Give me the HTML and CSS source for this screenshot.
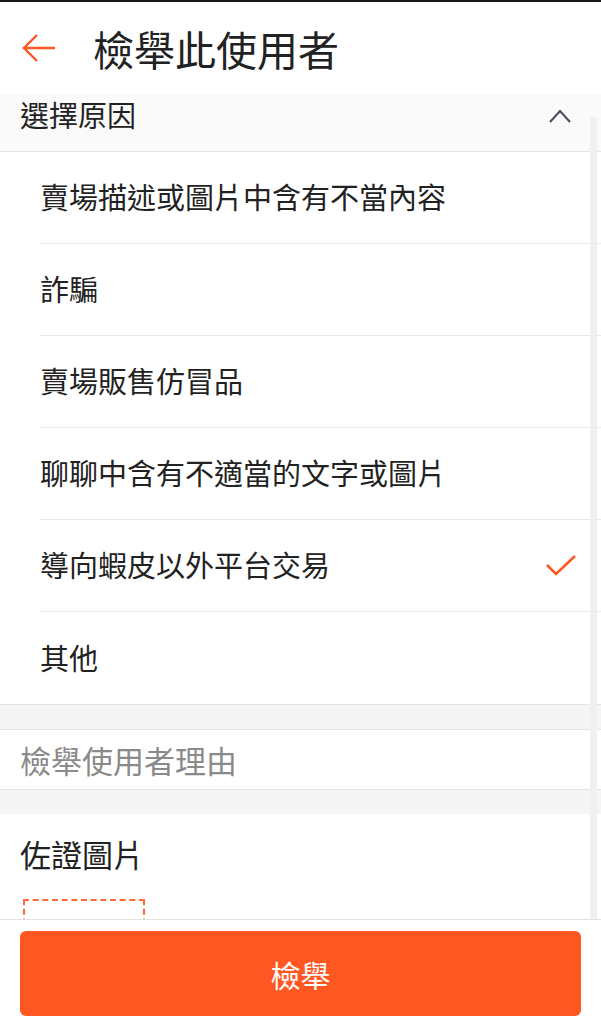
FILE: index.html
```html
<!DOCTYPE html>
<html lang="zh-Hant">
<head>
    <meta charset="UTF-8">
    <meta name="viewport" content="width=device-width, initial-scale=1.0">
    <title>檢舉此使用者</title>
    <link rel="stylesheet" href="styles.css">
</head>
<body>
    <div class="page">
        <div class="topbar">
            <svg class="back" width="34" height="30" viewBox="0 0 34 30">
                <path d="M33 15H3M15 2L2 15l13 13" fill="none" stroke="#ff5722" stroke-width="2.4"/>
            </svg>
            <div class="title">檢舉此使用者</div>
        </div>
        <div class="content">
            <div class="section-head">
                <span>選擇原因</span>
                <svg width="22" height="14" viewBox="0 0 22 14">
                    <path d="M1 13L11 2l10 11" fill="none" stroke="#4a4a5e" stroke-width="2"/>
                </svg>
            </div>
            <div class="options">
                <div class="option"><span>賣場描述或圖片中含有不當內容</span></div>
                <div class="option"><span>詐騙</span></div>
                <div class="option"><span>賣場販售仿冒品</span></div>
                <div class="option"><span>聊聊中含有不適當的文字或圖片</span></div>
                <div class="option selected">
                    <span>導向蝦皮以外平台交易</span>
                    <svg width="32" height="24" viewBox="0 0 32 24">
                        <path d="M2 11l9 9L30 2" fill="none" stroke="#ff5722" stroke-width="2.6"/>
                    </svg>
                </div>
                <div class="option"><span>其他</span></div>
            </div>
            <div class="gap"></div>
            <div class="reason">檢舉使用者理由</div>
            <div class="gap"></div>
            <div class="evidence">
                <div class="evidence-title">佐證圖片</div>
                <div class="upload"></div>
            </div>
            <div class="scroll-thumb"></div>
        </div>
        <div class="footer">
            <button class="submit">檢舉</button>
        </div>
    </div>
</body>
</html>
```

FILE: styles.css
```css
body {
    margin: 0;
    font-family: "Noto Sans CJK TC", "Noto Sans", sans-serif;
    background: #fff;
    color: #222;
}
.page {
    width: 601px;
    height: 1024px;
    display: flex;
    flex-direction: column;
    overflow: hidden;
}
.topbar {
    height: 93px;
    border-top: 2px solid #1a1a1a;
    display: flex;
    align-items: center;
    background: #fff;
}
.back {
    margin-left: 22px;
    margin-top: -2px;
}
.title {
    margin-left: 37px;
    font-size: 41px;
    line-height: 1;
    color: #222;
}
.content {
    flex: 1;
    min-height: 0;
    position: relative;
    background: #f5f5f5;
}
.section-head {
    box-sizing: border-box;
    height: 57px;
    background: #fafafa;
    border-bottom: 1px solid #e4e4e4;
    display: flex;
    align-items: center;
    justify-content: space-between;
    padding: 0 30px 18px 20px;
    font-size: 29px;
    line-height: 1;
}
.section-head svg {
    margin-top: 4px;
}
.options {
    background: #fff;
    border-bottom: 1px solid #e4e4e4;
}
.option {
    height: 91px;
    margin-left: 40px;
    padding-right: 24px;
    border-bottom: 1px solid #e8e8e8;
    display: flex;
    align-items: center;
    justify-content: space-between;
    font-size: 29px;
    line-height: 1;
}
.option span {
    margin-top: -2px;
}
.option:last-child {
    border-bottom: none;
    height: 92px;
}
.gap {
    height: 24px;
    background: #f5f5f5;
}
.reason {
    height: 59px;
    background: #fff;
    border-top: 1px solid #e4e4e4;
    border-bottom: 1px solid #e4e4e4;
    display: flex;
    align-items: center;
    padding-left: 20px;
    font-size: 31px;
    line-height: 1;
    color: #8a8a8a;
}
.evidence {
    background: #fff;
    padding: 24px 20px 0 20px;
    height: 200px;
}
.evidence-title {
    font-size: 31px;
    line-height: 1;
    color: #222;
}
.upload {
    width: 118px;
    height: 80px;
    margin: 30px 0 0 3px;
    border: 2px dashed #ff6a3d;
}
.scroll-thumb {
    position: absolute;
    right: 4px;
    top: 22px;
    bottom: 0;
    width: 7px;
    background: #f0f0f0;
}
.footer {
    position: relative;
    z-index: 1;
    border-top: 1px solid #e2e2e2;
    background: #fff;
    padding: 11px 20px 8px;
}
.submit {
    width: 100%;
    height: 85px;
    border: none;
    border-radius: 6px;
    background: #ff5722;
    color: #fff;
    font-family: "Noto Sans CJK TC", "Noto Sans", sans-serif;
    font-size: 30px;
    display: block;
}
```
